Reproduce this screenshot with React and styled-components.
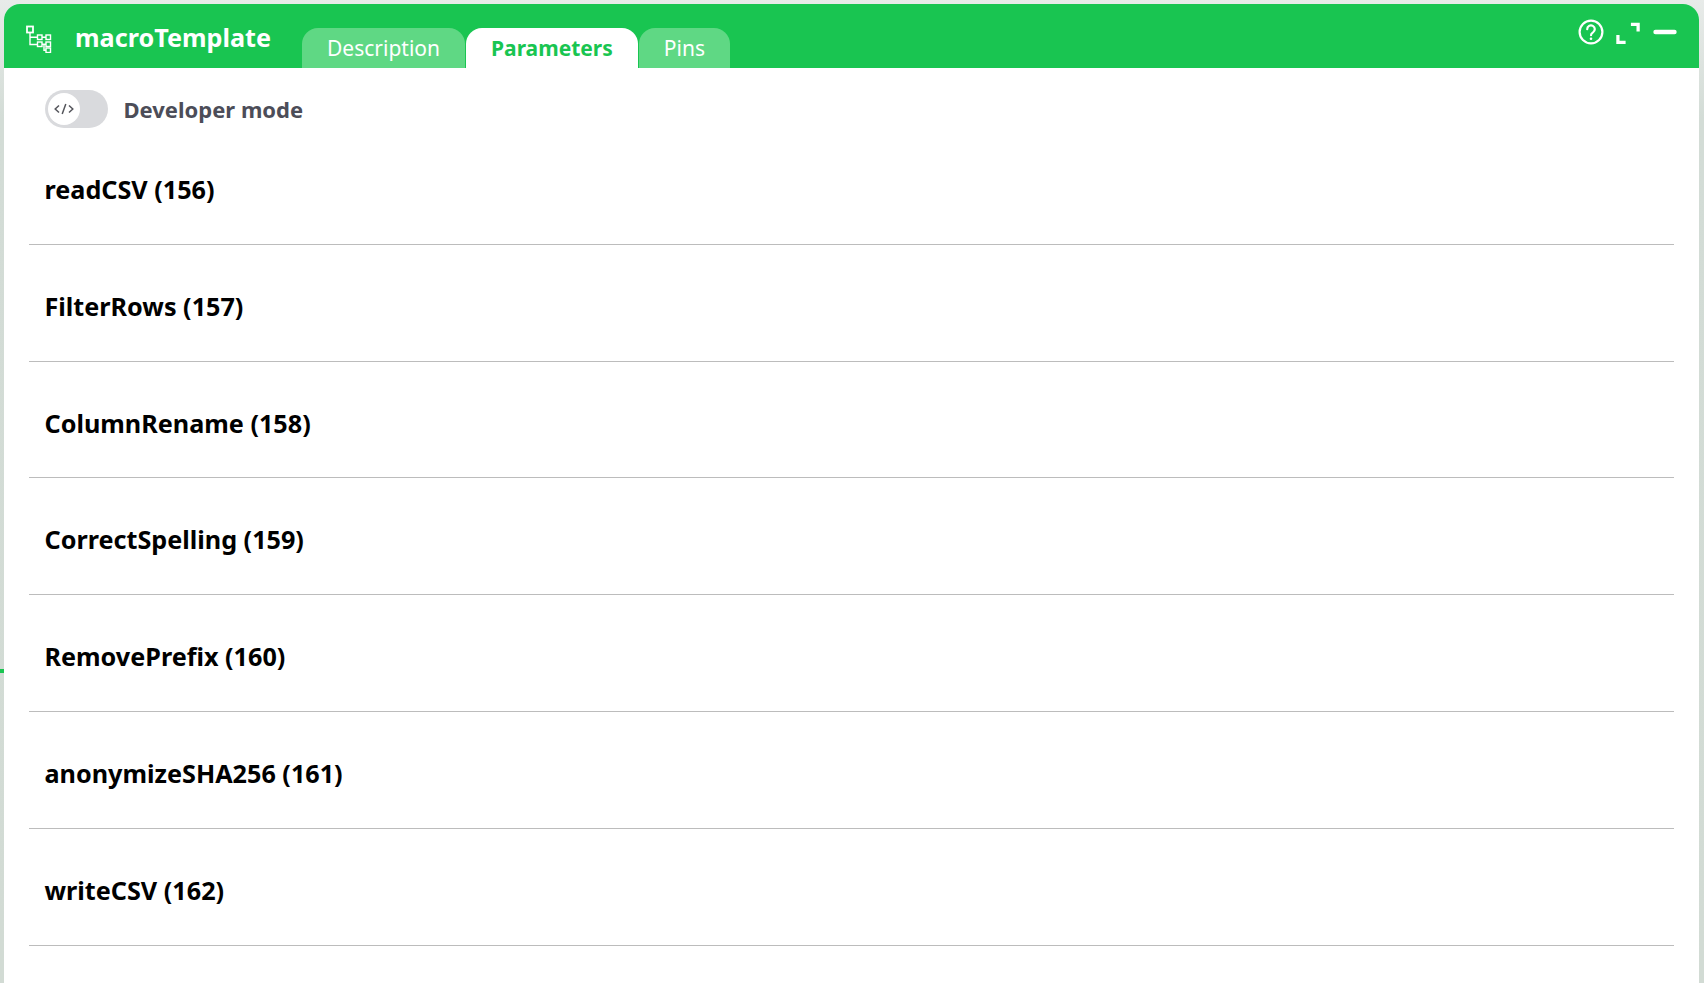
import React from "react";
import styled, { createGlobalStyle } from "styled-components";

const Global = createGlobalStyle`
  html, body { margin: 0; height: 100%; overflow: hidden; }
  body {
    background: linear-gradient(180deg, #e8ebe9 0%, #d3dcd6 12%, #d2dbd4 100%);
    font-family: "Noto Sans", "Open Sans", sans-serif;
  }
`;

const Stage = styled.div`
  height: 983px;
  padding: 4px 5px 0 4px;
  box-sizing: border-box;
  position: relative;
`;

const Tick = styled.div`
  position: absolute;
  left: 0;
  top: 669px;
  width: 4px;
  height: 4px;
  background: #19c551;
`;

const Card = styled.section`
  height: 979px;
  background: #fff;
  border-radius: 16px 16px 0 0;
  overflow: hidden;
`;

const Header = styled.header`
  height: 64px;
  background: #19c551;
  display: flex;
  align-items: flex-start;
  position: relative;
`;

const Logo = styled.svg`
  width: 30px;
  height: 30px;
  margin: 19px 0 0 18px;
  flex: none;
`;

const Title = styled.h1`
  margin: 13px 0 0 23px;
  font-size: 25.2px;
  line-height: 40px;
  font-weight: 700;
  color: #fff;
  width: 227px;
  flex: none;
`;

const Tabs = styled.nav`
  display: flex;
  gap: 1px;
  margin-top: 24px;
`;

const Tab = styled.div`
  height: 40px;
  box-sizing: border-box;
  padding: 0 25px;
  border-radius: 16px 16px 0 0;
  font-size: 21px;
  line-height: 40px;
  font-weight: ${(p) => (p.$active ? 700 : 400)};
  color: ${(p) => (p.$active ? "#19c551" : "#fff")};
  background: ${(p) => (p.$active ? "#fff" : "#5fd884")};
`;

const Actions = styled.div`
  margin-left: auto;
  margin-right: 22px;
  margin-top: 15px;
  display: flex;
  align-items: center;
  gap: 12px;
  color: #fff;
`;

const Icon = styled.svg`
  width: ${(p) => p.$w || 26}px;
  height: 26px;
  display: block;
`;

const DevRow = styled.div`
  display: flex;
  align-items: center;
  height: 38px;
  margin: 22px 0 0 41px;
  gap: 15.5px;
`;

const Toggle = styled.div`
  width: 63px;
  height: 38px;
  border-radius: 19px;
  background: #d9dadd;
  position: relative;
  flex: none;
`;

const Knob = styled.div`
  position: absolute;
  left: 3px;
  top: 3px;
  width: 32px;
  height: 32px;
  border-radius: 50%;
  background: #fff;
  color: #55565c;
  display: flex;
  align-items: center;
  justify-content: center;
`;

const DevLabel = styled.span`
  font-size: 22px;
  font-weight: 700;
  color: #4c4d58;
`;

const List = styled.div`
  margin: 0 25px 0 25px;
`;

const Row = styled.div`
  height: 116.83px;
  box-sizing: border-box;
  border-bottom: 1.5px solid #bcbcbc;
  padding: 39px 0 0 15.5px;
  font-size: 25.2px;
  line-height: 44px;
  font-weight: 700;
  color: #000;
`;

const rows = [
  "readCSV (156)",
  "FilterRows (157)",
  "ColumnRename (158)",
  "CorrectSpelling (159)",
  "RemovePrefix (160)",
  "anonymizeSHA256 (161)",
  "writeCSV (162)",
];

export default function App() {
  return (
    <>
      <Global />
      <Stage>
        <Tick />
        <Card>
          <Header>
            <Logo viewBox="0 0 30 30" fill="none" stroke="#fff" strokeWidth="1.4">
              <rect x="5" y="3.5" width="6" height="6" strokeWidth="1.8" />
              <rect x="15.5" y="12" width="4.5" height="4.5" />
              <rect x="15.5" y="19" width="4.5" height="4.5" />
              <rect x="24" y="12" width="4.5" height="4.5" />
              <rect x="24" y="19" width="4.5" height="4.5" />
              <rect x="24" y="25" width="4.5" height="4.5" />
              <path d="M8 9.5V21.5H15.5M8 14.2H15.5M20 14.2H24M20 21.2H24M22 21.2V27.2H24" />
            </Logo>
            <Title>macroTemplate</Title>
            <Tabs>
              <Tab>Description</Tab>
              <Tab $active>Parameters</Tab>
              <Tab>Pins</Tab>
            </Tabs>
            <Actions>
              <Icon viewBox="0 0 26 26" fill="none" stroke="currentColor" strokeWidth="2.2">
                <circle cx="13" cy="13" r="11.4" />
                <path d="M9.2 10.2a3.8 3.8 0 1 1 5.8 3.2c-1.2.7-2 1.3-2 2.8" strokeLinecap="round" />
                <circle cx="13" cy="19.8" r="1.3" fill="currentColor" stroke="none" />
              </Icon>
              <Icon $w={25} viewBox="0 0 26 26" fill="none" stroke="currentColor" strokeWidth="3.4">
                <path d="M15.5 5H23V12.5M2 16V23.7H10" />
              </Icon>
              <Icon $w={24} viewBox="0 0 24 26" fill="none" stroke="currentColor" strokeWidth="4.4" strokeLinecap="round">
                <path d="M2.5 13H21.5" />
              </Icon>
            </Actions>
          </Header>
          <DevRow>
            <Toggle>
              <Knob>
                <svg width="20" height="14" viewBox="0 0 20 14" fill="none" stroke="currentColor" strokeWidth="1.5">
                  <path d="M5 3.5 1.2 7 5 10.5M15 3.5 18.8 7 15 10.5M11.8 2 8.2 12" />
                </svg>
              </Knob>
            </Toggle>
            <DevLabel>Developer mode</DevLabel>
          </DevRow>
          <List>
            {rows.map((r) => (
              <Row key={r}>{r}</Row>
            ))}
          </List>
        </Card>
      </Stage>
    </>
  );
}
